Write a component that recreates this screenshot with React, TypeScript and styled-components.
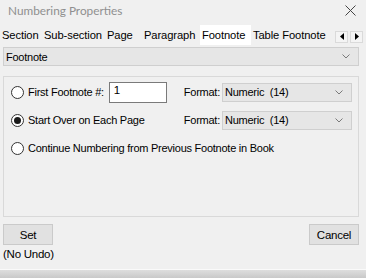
import React from 'react';
import styled, { createGlobalStyle } from 'styled-components';

const GlobalStyle = createGlobalStyle`
  html, body {
    margin: 0;
    padding: 0;
    background: #f0f0f0;
  }
  * { box-sizing: border-box; }
`;

const Window = styled.div`
  width: 366px;
  height: 278px;
  display: flex;
  flex-direction: column;
  background: #f0f0f0;
  font-family: "Liberation Sans", Arial, sans-serif;
  font-size: 11px;
  letter-spacing: -0.25px;
  color: #000;
  overflow: hidden;
`;

const TitleBar = styled.div`
  height: 25px;
  display: flex;
  align-items: center;
  justify-content: space-between;
  padding: 0 10px 5px 8px;
`;

const Title = styled.span`
  font-family: Lato, "Open Sans", sans-serif;
  font-size: 11.8px;
  letter-spacing: 0;
  color: #8f8f8f;
`;

const TabStrip = styled.div`
  height: 21px;
  display: flex;
  align-items: stretch;
`;

const Tab = styled.div<{ $active?: boolean; $width: number }>`
  width: ${p => p.$width}px;
  height: 20px;
  padding: 0 0 1px 2px;
  display: flex;
  align-items: center;
  font-size: 11.2px;
  letter-spacing: -0.1px;
  white-space: nowrap;
  background: ${p => (p.$active ? '#ffffff' : 'transparent')};
`;

const ScrollArrows = styled.div`
  margin-left: auto;
  margin-right: 3px;
  align-self: center;
  display: flex;
  gap: 2px;
  margin-top: 2px;
`;

const ArrowButton = styled.div`
  width: 13px;
  height: 12px;
  border: 1px solid #dadada;
  background: #f4f4f4;
  display: flex;
  align-items: center;
  justify-content: center;
`;

const Content = styled.div`
  padding: 1px 7px 0 3px;
  display: flex;
  flex-direction: column;
`;

const ComboBox = styled.div<{ $width?: number; $height?: number }>`
  width: ${p => (p.$width ? `${p.$width}px` : '100%')};
  height: ${p => p.$height ?? 19}px;
  background: #e6e6e6;
  border: 1px solid #cfcfcf;
  display: flex;
  align-items: center;
  justify-content: space-between;
  padding: 0 8px 0 2px;
  white-space: nowrap;
`;

const GroupBox = styled.div`
  margin-top: 10px;
  height: 141px;
  border: 1px solid #d9d9d9;
  padding: 4px 6px 0 7px;
  display: flex;
  flex-direction: column;
  gap: 6px;
`;

const OptionRow = styled.div`
  height: 22px;
  display: flex;
  align-items: center;
`;

const Radio = styled.span<{ $checked?: boolean }>`
  width: 13px;
  height: 13px;
  border-radius: 50%;
  border: 1px solid #333;
  background: #fff;
  display: flex;
  align-items: center;
  justify-content: center;
  margin-right: 4px;
  flex-shrink: 0;

  &::after {
    content: '';
    width: 7px;
    height: 7px;
    border-radius: 50%;
    background: ${p => (p.$checked ? '#1a1a1a' : 'transparent')};
  }
`;

const OptionLabel = styled.span`
  white-space: nowrap;
`;

const NumberInput = styled.div`
  width: 58px;
  height: 21px;
  margin-left: 5px;
  border: 1px solid #7a7a7a;
  background: #fff;
  padding: 1px 4px;
  font-size: 11.5px;
`;

const FormatField = styled.div`
  margin-left: auto;
  display: flex;
  align-items: center;
  gap: 2px;
`;

const ButtonRow = styled.div`
  margin-top: 7px;
  display: flex;
  justify-content: space-between;
`;

const Button = styled.div`
  width: 50px;
  height: 21px;
  background: #e1e1e1;
  border: 1px solid #cacaca;
  display: flex;
  align-items: center;
  justify-content: center;
  font-size: 11.5px;
`;

const Note = styled.div`
  margin-top: 3px;
  font-size: 11.5px;
`;

const BottomEdge = styled.div`
  margin-top: auto;
  height: 9px;
  border-top: 1px solid #fafafa;
  background: linear-gradient(#dedede, #c9c9c9);
`;

const Chevron = () => (
  <svg width="8" height="5" viewBox="0 0 8 5">
    <path d="M0.5 0.5 L4 4 L7.5 0.5" fill="none" stroke="#7a7a7a" strokeWidth="1" />
  </svg>
);

const CloseIcon = () => (
  <svg width="11" height="11" viewBox="0 0 11 11">
    <path d="M0.5 0.5 L10.5 10.5 M10.5 0.5 L0.5 10.5" stroke="#444" strokeWidth="1" />
  </svg>
);

const Triangle = ({ dir }: { dir: 'left' | 'right' }) => (
  <svg width="4" height="7" viewBox="0 0 4 7">
    <path d={dir === 'left' ? 'M4 0 L0 3.5 L4 7 Z' : 'M0 0 L4 3.5 L0 7 Z'} fill="#000" />
  </svg>
);

const tabs = [
  { label: 'Section', width: 42 },
  { label: 'Sub-section', width: 63 },
  { label: 'Page', width: 37 },
  { label: 'Paragraph', width: 58 },
  { label: 'Footnote', width: 51 },
  { label: 'Table Footnote', width: 82 },
];

export default function App() {
  return (
    <Window>
      <GlobalStyle />
      <TitleBar>
        <Title>Numbering Properties</Title>
        <CloseIcon />
      </TitleBar>
      <TabStrip>
        {tabs.map(t => (
          <Tab key={t.label} $width={t.width} $active={t.label === 'Footnote'}>
            {t.label}
          </Tab>
        ))}
        <ScrollArrows>
          <ArrowButton><Triangle dir="left" /></ArrowButton>
          <ArrowButton><Triangle dir="right" /></ArrowButton>
        </ScrollArrows>
      </TabStrip>
      <Content>
        <ComboBox>
          <span>Footnote</span>
          <Chevron />
        </ComboBox>
        <GroupBox>
          <OptionRow>
            <Radio />
            <OptionLabel>First Footnote #:</OptionLabel>
            <NumberInput>1</NumberInput>
            <FormatField>
              <OptionLabel>Format:</OptionLabel>
              <ComboBox $width={130} $height={19}>
                <span>Numeric&nbsp;&nbsp;(14)</span>
                <Chevron />
              </ComboBox>
            </FormatField>
          </OptionRow>
          <OptionRow>
            <Radio $checked />
            <OptionLabel>Start Over on Each Page</OptionLabel>
            <FormatField>
              <OptionLabel>Format:</OptionLabel>
              <ComboBox $width={130} $height={19}>
                <span>Numeric&nbsp;&nbsp;(14)</span>
                <Chevron />
              </ComboBox>
            </FormatField>
          </OptionRow>
          <OptionRow>
            <Radio />
            <OptionLabel>Continue Numbering from Previous Footnote in Book</OptionLabel>
          </OptionRow>
        </GroupBox>
        <ButtonRow>
          <Button>Set</Button>
          <Button>Cancel</Button>
        </ButtonRow>
        <Note>(No Undo)</Note>
      </Content>
      <BottomEdge />
    </Window>
  );
}
